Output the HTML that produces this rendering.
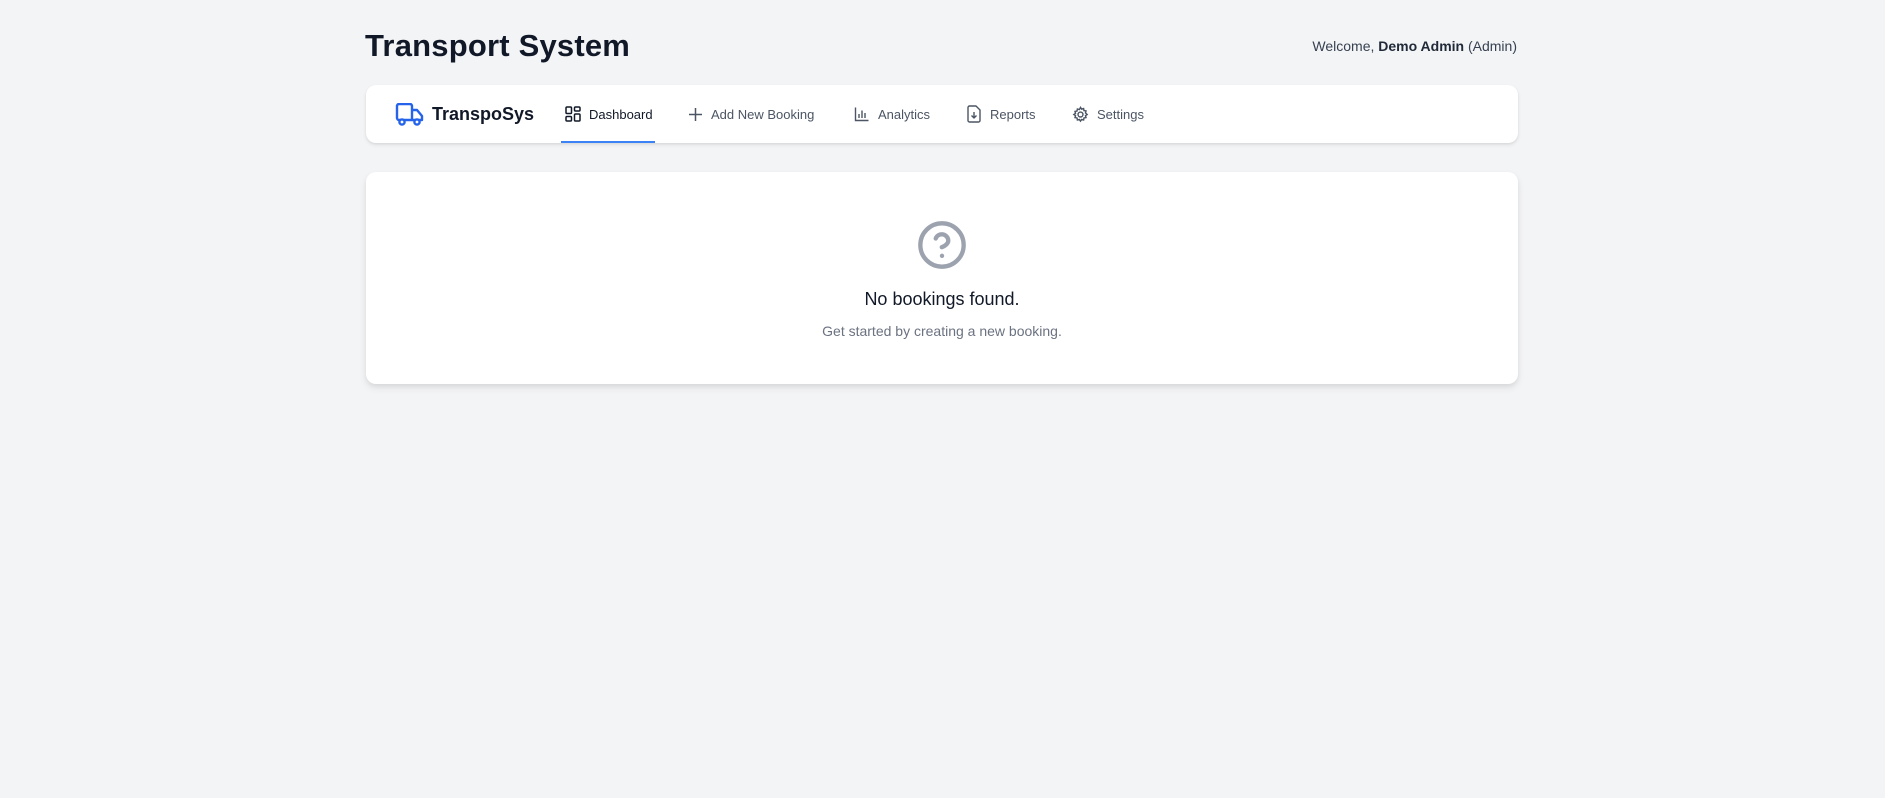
<!DOCTYPE html>
<html><head><meta charset="utf-8"><style>
*{box-sizing:border-box;margin:0;padding:0}
body{width:1885px;height:798px;background:#f3f4f6;font-family:"Liberation Sans",sans-serif;position:relative;overflow:hidden;color:#111827}
.title{position:absolute;left:365px;top:28px;font-size:31px;font-weight:bold;color:#111827;letter-spacing:0.2px}
.welcome{position:absolute;right:368px;top:38px;font-size:14px;color:#374151}
.welcome b{color:#1f2937}
.nav{position:absolute;left:366px;top:85px;width:1152px;height:58px;background:#fff;border-radius:10px;box-shadow:0 2px 4px rgba(0,0,0,.08),0 1px 2px rgba(0,0,0,.06)}
.brand{position:absolute;left:29px;top:18px;display:flex;align-items:center}
.brand span{font-size:18px;font-weight:bold;margin-left:8px;color:#111827}
.item{position:absolute;top:0;height:58px;display:flex;align-items:center;font-size:13px;color:#4b5563}
.item svg{margin-right:8px}
.item.active{color:#111827}
.under{position:absolute;left:195px;top:56px;width:94px;height:2px;background:#3b82f6}
.card{position:absolute;left:366px;top:172px;width:1152px;height:212px;background:#fff;border-radius:10px;box-shadow:0 4px 8px rgba(0,0,0,.08),0 2px 4px rgba(0,0,0,.05)}
.q{position:absolute;left:550px;top:47px}
.h{position:absolute;left:0;width:100%;top:117px;text-align:center;font-size:18px;color:#111827}
.s{position:absolute;left:0;width:100%;top:151px;text-align:center;font-size:14px;color:#6b7280}
</style></head><body>
<div class="title">Transport System</div>
<div class="welcome">Welcome, <b>Demo Admin</b> (Admin)</div>
<div class="nav">
 <div class="brand"><svg width="29" height="23" viewBox="0 0 29 23" fill="none" stroke="#2563eb" stroke-width="2.4" stroke-linejoin="round"><path d="M2 3a2 2 0 0 1 2-2h11a2 2 0 0 1 2 2v14H4a2 2 0 0 1-2-2z"/><path d="M17 7h5l5 6v4h-10"/><circle cx="7" cy="19" r="2.6" fill="#fff"/><circle cx="22" cy="19" r="2.6" fill="#fff"/></svg><span>TranspoSys</span></div>
 <div class="item active" style="left:199px"><svg width="16" height="16" viewBox="0 0 16 16" fill="none" stroke="#111827" stroke-width="1.5"><rect x="1" y="1" width="5.5" height="6.5" rx="1"/><rect x="9.5" y="1" width="5.5" height="4" rx="1"/><rect x="1" y="10.5" width="5.5" height="4.5" rx="1"/><rect x="9.5" y="8" width="5.5" height="7" rx="1"/></svg>Dashboard</div>
 <div class="under"></div>
 <div class="item" style="left:322px"><svg width="15" height="15" viewBox="0 0 15 15" stroke="#4b5563" stroke-width="1.5"><path d="M7.5 1v13M1 7.5h13"/></svg>Add New Booking</div>
 <div class="item" style="left:488px"><svg width="16" height="16" viewBox="0 0 16 16" fill="none" stroke="#4b5563" stroke-width="1.4"><path d="M1.5 1.5v13h13M5 12V8M8 12V4.5M11 12V7"/></svg>Analytics</div>
 <div class="item" style="left:600px"><svg width="16" height="18" viewBox="0 0 16 18" fill="none" stroke="#4b5563" stroke-width="1.4" stroke-linejoin="round"><path d="M2 2.5a1.5 1.5 0 0 1 1.5-1.5H10l4 4v10.5a1.5 1.5 0 0 1-1.5 1.5h-9A1.5 1.5 0 0 1 2 15.5z"/><path d="M8 7v6M5.5 10.5 8 13l2.5-2.5"/></svg>Reports</div>
 <div class="item" style="left:706px"><svg width="17" height="17" viewBox="0 0 24 24" fill="none" stroke="#4b5563" stroke-width="2"><path d="M12 2l1.6 2.4 2.8-.8.5 2.9 2.9.5-.8 2.8L21.4 12 19 13.6l.8 2.8-2.9.5-.5 2.9-2.8-.8L12 21.4 10.4 19l-2.8.8-.5-2.9-2.9-.5.8-2.8L2.6 12 5 10.4l-.8-2.8 2.9-.5.5-2.9 2.8.8z"/><circle cx="12" cy="12" r="3.5"/></svg>Settings</div>
</div>
<div class="card">
 <svg class="q" width="52" height="52" viewBox="0 0 24 24" fill="none" stroke="#9ca3af" stroke-width="2" stroke-linecap="round" stroke-linejoin="round"><circle cx="12" cy="12" r="10"/><path d="M9.1 9a3 3 0 0 1 5.8 1c0 2-3 3-3 3"/><path d="M12 17h.01"/></svg>
 <div class="h">No bookings found.</div>
 <div class="s">Get started by creating a new booking.</div>
</div>
</body></html>
